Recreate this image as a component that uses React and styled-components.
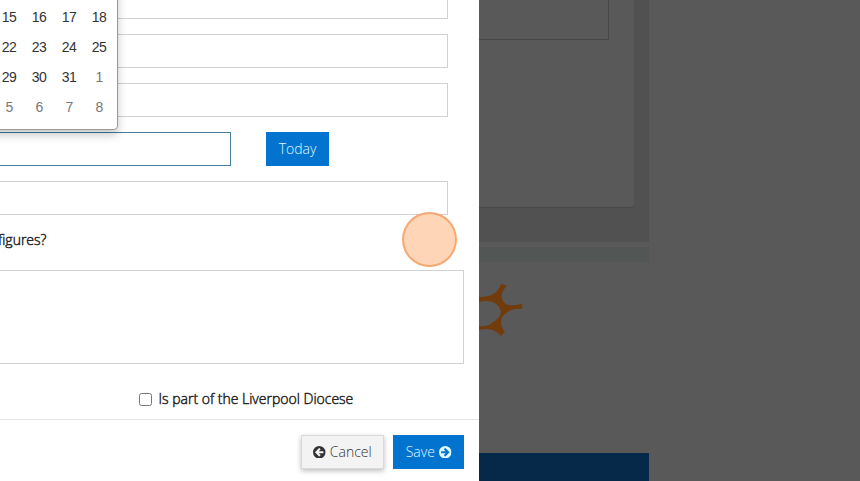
import React from "react"
import styled, { createGlobalStyle } from "styled-components"

const GlobalStyle = createGlobalStyle`
  *, *::before, *::after {
    box-sizing: border-box;
  }

  body {
    margin: 0;
    overflow: hidden;
    background: #595959;
    font-family: "Open Sans", "Noto Sans", sans-serif;
    font-weight: 300;
    font-size: 14px;
    line-height: 20px;
    color: #333;
  }
`

const Screen = styled.div`
  position: relative;
  display: grid;
  grid-template-columns: 479px 1fr;
  width: 860px;
  height: 481px;
  overflow: hidden;
`

const Modal = styled.main`
  display: flex;
  flex-direction: column;
  background: #fff;
  min-width: 0;
`

const Fields = styled.form`
  display: flex;
  flex-direction: column;
  height: 419px;
  margin: 0;
`

const Inputs = styled.div`
  display: flex;
  flex-direction: column;
  gap: 15px;
  margin-top: -15px;
`

const Input = styled.input`
  width: ${({ $active }) => ($active ? "251px" : "468px")};
  height: 34px;
  margin-left: -20px;
  padding: 6px 12px;
  border: 1px solid ${({ $active }) => ($active ? "#417f9b" : "#d1d1d1")};
  border-radius: 0;
  background: #fff;
  outline: none;
`

const DateRow = styled.div`
  display: flex;
  gap: 35px;
`

const Button = styled.button`
  display: inline-flex;
  align-items: center;
  justify-content: center;
  gap: 4px;
  width: ${({ $width }) => $width}px;
  height: 34px;
  padding: 0;
  border: 1px solid ${({ $plain }) => ($plain ? "#d9d9d9" : "#0274d0")};
  border-radius: 0;
  background: ${({ $plain }) => ($plain ? "#f3f3f3" : "#0274d0")};
  box-shadow: ${({ $plain }) =>
    $plain ? "0 2px 5px rgba(0, 0, 0, 0.26)" : "none"};
  color: ${({ $plain }) => ($plain ? "#333" : "#e0f8ff")};
  font: inherit;
`

const Icon = styled.svg`
  width: 12.5px;
  height: 12.5px;
  flex: none;
  fill: currentColor;
  transform: ${({ $flip }) => ($flip ? "scaleX(-1)" : "none")};
`

const Question = styled.label`
  display: block;
  margin: 15px 0 20px -2px;
  color: #222;
  -webkit-text-stroke: 0.45px currentColor;
`

const Notes = styled.textarea`
  display: block;
  width: 484px;
  height: 94px;
  margin-left: -20px;
  border: 1px solid #d1d1d1;
  background: #fff;
  resize: none;
  outline: none;
`

const CheckRow = styled.label`
  display: flex;
  align-items: center;
  gap: 6.5px;
  margin: 25px 0 0 139px;
  color: #222;
  white-space: nowrap;
  -webkit-text-stroke: 0.45px currentColor;
`

const Checkbox = styled.input`
  width: 13px;
  height: 13px;
  margin: 1px 0 0;
`

const Footer = styled.footer`
  display: flex;
  justify-content: flex-end;
  gap: 9px;
  flex: 1;
  padding: 15px 15px 0 0;
  border-top: 1px solid #e5e5e5;
`

const Calendar = styled.div`
  position: absolute;
  top: -20px;
  left: -100px;
  width: 218px;
  height: 150px;
  padding: 21px 3px 0 0;
  display: grid;
  grid-template-columns: repeat(4, 30px);
  grid-auto-rows: 30px;
  justify-content: end;
  background: #fff;
  border: 1px solid #999;
  border-radius: 4px;
  box-shadow: 0 5px 10px rgba(0, 0, 0, 0.22);
`

const Day = styled.span`
  display: flex;
  align-items: center;
  justify-content: center;
  color: ${({ $muted }) => ($muted ? "#777" : "#333")};
  font-family: "Liberation Sans", Arial, sans-serif;
  font-weight: 400;
  font-size: 14px;
  letter-spacing: -0.6px;
`

const Pointer = styled.div`
  position: absolute;
  top: 212px;
  left: 402px;
  width: 55px;
  height: 55px;
  border: 2px solid rgba(240, 145, 80, 0.65);
  border-radius: 50%;
  background: rgba(254, 209, 176, 0.92);
`

const Backdrop = styled.aside`
  display: flex;
  flex-direction: column;
  align-items: flex-start;
  background: #595959;
`

const Section = styled.div`
  width: 170px;
  height: 242px;
  padding-right: 15px;
  background: #515151;
`

const Card = styled.div`
  height: 208px;
  padding-right: 25px;
  background: #595959;
  border-bottom: 1px solid #484848;
  border-bottom-right-radius: 4px;
`

const Box = styled.div`
  height: 40px;
  border: solid #474747;
  border-width: 0 1px 1px 0;
`

const Strip = styled.div`
  width: 170px;
  height: 15px;
  margin-top: 5px;
  background: #525655;
`

const Logo = styled.svg`
  width: 60px;
  height: 80px;
  margin-top: 8px;
`

const Band = styled.div`
  width: 170px;
  flex: 1;
  margin-top: 103px;
  background: #06294a;
`

const days = [15, 16, 17, 18, 22, 23, 24, 25, 29, 30, 31, 1, 5, 6, 7, 8]

const ArrowCircle = ({ right }) => (
  <Icon viewBox="0 -128 1536 1536" $flip={right}>
    <path
      fillRule="evenodd"
      d="M1280 576v128q0 26 -19 45t-45 19h-502l189 189q19 19 19 45t-19 45l-91 91q-18 18 -45 18t-45 -18l-362 -362l-91 -91q-18 -18 -18 -45t18 -45l91 -91l362 -362q18 -18 45 -18t45 18l91 91q18 18 18 45t-18 45l-189 189h502q26 0 45 19t19 45zM1536 640a768 768 0 1 0 -1536 0a768 768 0 1 0 1536 0z"
    />
  </Icon>
)

const App = () => {
  return (
    <>
      <GlobalStyle />
      <Screen>
        <Modal>
          <Fields>
            <Inputs>
              <Input />
              <Input />
              <Input />
              <DateRow>
                <Input $active />
                <Button type="button" $width={63}>
                  Today
                </Button>
              </DateRow>
              <Input />
            </Inputs>
            <Question>figures?</Question>
            <Notes />
            <CheckRow>
              <Checkbox type="checkbox" />
              Is part of the Liverpool Diocese
            </CheckRow>
          </Fields>
          <Footer>
            <Button $plain $width={83}>
              <ArrowCircle />
              Cancel
            </Button>
            <Button $width={71}>
              Save
              <ArrowCircle right />
            </Button>
          </Footer>
        </Modal>

        <Backdrop>
          <Section>
            <Card>
              <Box />
            </Card>
          </Section>
          <Strip />
          {/* right half of the cog */}
          <Logo viewBox="0 0 60 80">
            <path
              fill="#723b0b"
              fillRule="evenodd"
              d="M0 27 C6 27 12 26 16 23 Q20 20 22 14 L28 15.500 Q22 22 22.700 27 C23 31 26 34 29.500 35 Q34 36 43.300 33.700 L43 39 C37 38 32 39.500 28 42.500 C24 45 22 48 22 51 Q21.500 56 25.700 61.700 L22 66 Q18 62 14 60 Q7 58 0 60 Z M0 32 L0 56 C7 57 11 55 14.300 52 C19 49 21.700 46 21.700 41.700 C21.700 37 17 33 12.700 31.700 C9 30.500 4 31 0 32 Z"
            />
          </Logo>
          <Band />
        </Backdrop>

        <Calendar>
          {days.map((day, i) => (
            <Day key={day} $muted={i > 10}>
              {day}
            </Day>
          ))}
        </Calendar>
        <Pointer />
      </Screen>
    </>
  )
}

export default App
